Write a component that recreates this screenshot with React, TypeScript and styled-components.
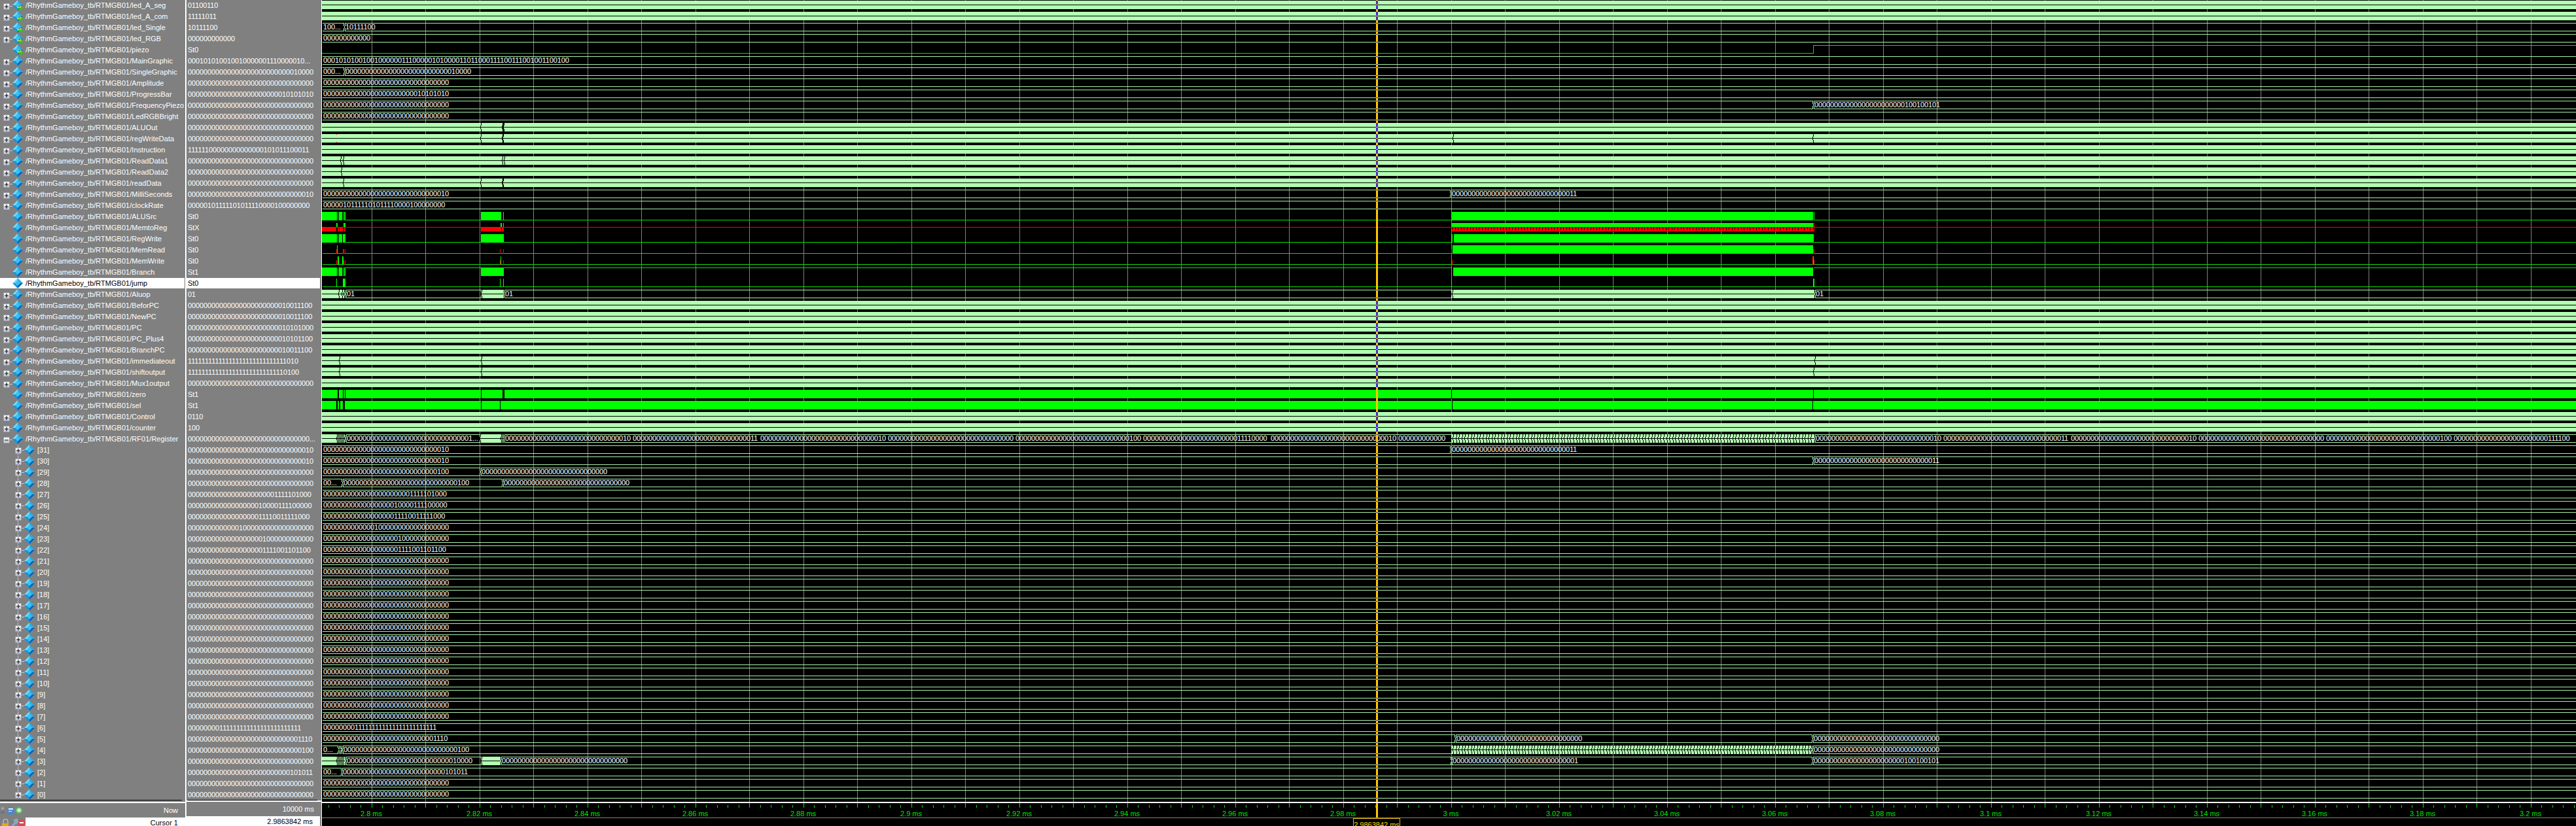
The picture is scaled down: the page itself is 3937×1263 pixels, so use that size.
import React from "react";
import styled, { createGlobalStyle } from "styled-components";

const FONT = `"Liberation Sans", Arial, sans-serif`;
const Z32 = "00000000000000000000000000000000";
const bits = (s: string) => s.padStart(32, "0");

const BAND = "#b3ffb3";
const LINE = "#a8f0a8";
const GREEN = "#00ff00";
const GLINE = "#08e008";
const RED = "#ff0000";
const END = 3937;
const CUR = 2103;

const GlobalStyle = createGlobalStyle`
  html, body { margin: 0; padding: 0; background: #808080; overflow: hidden; }
  #root { width: 3937px; height: 1263px; }
`;

const Window = styled.div`
  display: flex;
  width: 3937px;
  height: 1263px;
  overflow: hidden;
  background: #808080;
  font: 11px/16px ${FONT};
  color: #fff;
`;
const Pane = styled.div<{ $w: number }>`
  flex: 0 0 ${(p) => p.$w}px;
  display: flex;
  flex-direction: column;
  min-width: 0;
`;
const Sash = styled.div<{ $w: number }>`
  flex: 0 0 ${(p) => p.$w}px;
  background: #fff;
`;
const WavePane = styled.div`
  flex: 1 1 auto;
  display: flex;
  flex-direction: column;
  background: #000;
  min-width: 0;
`;
const List = styled.div`
  height: 1226px;
  display: flex;
  flex-direction: column;
`;
const NameRow = styled.div<{ $sel?: boolean }>`
  flex: 0 0 16px;
  margin-bottom: 1px;
  margin-right: 1px;
  display: flex;
  align-items: center;
  white-space: nowrap;
  overflow: hidden;
  background: ${(p) => (p.$sel ? "#fff" : "transparent")};
  color: ${(p) => (p.$sel ? "#000" : "#fff")};
`;
const NameText = styled.span`
  letter-spacing: 0.02px;
`;
const ValueRow = styled.div<{ $sel?: boolean }>`
  flex: 0 0 16px;
  margin-bottom: 1px;
  margin-right: 2px;
  padding-left: 2px;
  white-space: nowrap;
  overflow: hidden;
  letter-spacing: -0.12px;
  background: ${(p) => (p.$sel ? "#fff" : "transparent")};
  color: ${(p) => (p.$sel ? "#000" : "#fff")};
`;
const EndLine = styled.div<{ $l: number; $r: number }>`
  height: 1px;
  margin: -1px ${(p) => p.$r}px 0 ${(p) => p.$l}px;
  background: #000;
`;
const Divider = styled.div`
  flex: 0 0 2px;
  background: #fff;
`;
const NowRow = styled.div`
  flex: 0 0 22px;
  display: flex;
  align-items: center;
  justify-content: space-between;
  padding-right: 11px;
  line-height: 22px;
`;
const NowValue = styled(NowRow)`
  justify-content: flex-end;
`;
const CursorName = styled.div`
  flex: 0 0 13px;
  display: flex;
  align-items: flex-start;
  overflow: hidden;
`;
const CursorLabel = styled.div`
  flex: 1 1 auto;
  height: 16px;
  background: #fff;
  color: #000;
  text-align: right;
  padding-right: 11px;
  margin-right: 0;
`;
const CursorValue = styled(CursorLabel)`
  flex: 0 0 13px;
  margin-right: 2px;
`;
const CursorBar = styled.div`
  flex: 1 1 auto;
  border-top: 1px solid #808080;
  background: #000;
  overflow: hidden;
`;
const CursorTag = styled.div`
  width: 72px;
  height: 18px;
  border: 1px solid #e8b400;
  border-bottom: 0;
  box-sizing: border-box;
  color: #ffd800;
  text-align: center;
  line-height: 19px;
  white-space: nowrap;
`;
const Svg = styled.svg`
  display: block;
  flex: 0 0 auto;
`;
const WaveLabel = styled.text`
  font: 11px ${FONT};
  letter-spacing: -0.12px;
  fill: #fff;
`;
const RulerLabel = styled.text`
  font: 11px ${FONT};
  fill: #00e600;
  text-anchor: middle;
`;

/* ---------- tree / object glyphs ---------- */
const Diamond = ({ x, y = 0, out }: { x: number; y?: number; out?: boolean }) => (
  <g transform={`translate(${x} ${y})`}>
    <polygon points="8,0 0,8 8,8" fill="#78dcfb" />
    <polygon points="8,0 16,8 8,8" fill="#22aee9" />
    <polygon points="0,8 8,16 8,8" fill="#1593dd" />
    <polygon points="16,8 8,16 8,8" fill="#0a63b6" />
    <polygon points="8,3 4,8 8,12 12,8" fill="#3cc0f2" />
    {out && (
      <>
        <polygon points="7,10.5 12,10.5 12,8 16.5,12 12,16 12,13.5 7,13.5" fill="#35c81a" />
        <polygon points="7,10.5 12,10.5 12,8 14,10 12,11.8 7,11.8" fill="#d8f040" />
      </>
    )}
  </g>
);
const Expander = ({ x, y = 4, open }: { x: number; y?: number; open?: boolean }) => (
  <g transform={`translate(${x} ${y})`}>
    <rect x="0.5" y="0.5" width="9" height="9" rx="1" fill="#f2f3f8" stroke="#9a9aa6" />
    <rect x="1" y="6" width="8" height="3" fill="#c9cde0" />
    <rect x="2" y="4.5" width="6" height="1" fill="#000" />
    {!open && <rect x="4.5" y="2" width="1" height="6" fill="#000" />}
  </g>
);
const TreeIcon = ({ child, expand, open, out, last }: { child?: boolean; expand?: boolean; open?: boolean; out?: boolean; last?: boolean }) =>
  child ? (
    <Svg width={57} height={16} viewBox="0 0 57 16">
      <rect x="27" y="0" width="1" height={last ? 5 : 16} fill="#c8c8c8" />
      <rect x="32" y="8" width="5" height="1" fill="#c8c8c8" />
      <Expander x={23} />
      <Diamond x={37} />
    </Svg>
  ) : (
    <Svg width={39} height={17} viewBox="0 0 39 17">
      {expand && <rect x="14" y="9" width="5" height="1" fill="#c8c8c8" />}
      {expand && <Expander x={5} y={5} open={open} />}
      <Diamond x={19} out={out} />
    </Svg>
  );

const NowIcons = () => (
  <Svg width={36} height={16} viewBox="0 0 36 16">
    <circle cx="4" cy="5" r="2" fill="#a4a4b0" />
    <path d="M0 12 Q4 6 8 12 L8 13 L0 13 Z" fill="#6c7488" />
    <rect x="11" y="3" width="11" height="11" fill="#4d87cf" />
    <rect x="13" y="5" width="7" height="2" fill="#e8f0fa" />
    <rect x="13" y="9" width="5" height="1" fill="#e8f0fa" />
    <path d="M15 14 h4 l-2 2 z" fill="#4d87cf" />
    <circle cx="29" cy="8" r="5.5" fill="#58b458" />
    <circle cx="29" cy="8" r="3.6" fill="#9fe09f" />
    <rect x="26.5" y="7.5" width="5" height="1" fill="#fff" />
    <rect x="28.5" y="5.5" width="1" height="5" fill="#fff" />
  </Svg>
);
const CursorIcons = () => (
  <Svg width={39} height={16} viewBox="0 0 39 16" style={{ flex: "0 0 39px" }}>
    <path d="M5 9 V6 a3.5 3.5 0 0 1 7 0 V9" fill="none" stroke="#c8c8c8" strokeWidth="1.2" />
    <rect x="3" y="9" width="10" height="7" fill="#e0aa20" />
    <path d="M16 15 L23 7 L21.5 4 Q24 1.5 27 3 L25 5.5 L26 6.5 L28 5 Q28.5 8 25.5 9 L24 8.5 L18 16 Z" fill="#6f9fd8" stroke="#d8e4f4" strokeWidth="0.5" />
    <circle cx="33" cy="8" r="5.5" fill="#e04848" />
    <rect x="30" y="7" width="6" height="2" fill="#fff" />
  </Svg>
);

/* ---------- signal data ---------- */
type Seg = { a: number; b: number; text?: string | string[]; band?: boolean; marks?: number[]; dots?: number[] };
type Sig = {
  base: "low" | "high" | "mid-red" | "fullfill";
  fills?: number[][];
  gaps?: number[][];
  ticks?: number[];
  halfRed?: number[][];
  tallRed?: number[][];
  half?: number[][];
  lows?: number[][];
  stripes?: number[];
};
type RowDef = {
  name: string;
  value: string;
  child?: boolean;
  out?: boolean;
  open?: boolean;
  sel?: boolean;
  segs?: Seg[];
  sig?: Sig;
};
const P = "/RhythmGameboy_tb/RTMGB01/";
const band = (...marks: number[]): Seg[] => [{ a: 492, b: END, band: true, marks }];
const txt = (s: string): Seg[] => [{ a: 492, b: END, text: s }];

const hash = (a: number, b: number) => {
  const out: number[] = [];
  for (let x = a; x < b; x += 4.6) out.push(Math.round(x));
  return out;
};

const regWords = [
  "00000000000000000000000000000010",
  "00000000000000000000000000000011",
  "00000000000000000000000000000010",
  "00000000000000000000000000000000",
  "00000000000000000000000000000100",
  "00000000000000000000000011110000",
  "00000000000000000000000000000010",
  "00000000000000000000000001111000",
];

const rowDefs: RowDef[] = [
  { name: P + "led_A_seg", value: "01100110", out: true, segs: band() },
  { name: P + "led_A_com", value: "11111011", out: true, segs: band() },
  { name: P + "led_Single", value: "10111100", out: true, segs: [{ a: 492, b: 526, text: "100..." }, { a: 526, b: END, text: "10111100" }] },
  { name: P + "led_RGB", value: "000000000000", out: true, segs: txt("000000000000") },
  { name: P + "piezo", value: "St0", out: true, sig: { base: "low", lows: [[492, 2771]], ticks: [] } },
  { name: P + "MainGraphic", value: "000101010010010000001110000010...", segs: txt("0001010100100100000011100000101000011011000111100111001001100100") },
  { name: P + "SingleGraphic", value: bits("10000"), segs: [{ a: 492, b: 526, text: "000..." }, { a: 526, b: END, text: bits("10000") }] },
  { name: P + "Amplitude", value: Z32, segs: txt(Z32) },
  { name: P + "ProgressBar", value: bits("10101010"), segs: txt(bits("10101010")) },
  { name: P + "FrequencyPiezo", value: Z32, segs: [{ a: 492, b: 2771, text: Z32 }, { a: 2771, b: END, text: bits("100100101") }] },
  { name: P + "LedRGBBright", value: Z32, segs: txt(Z32) },
  { name: P + "ALUOut", value: Z32, segs: band(734, 767, 768, 769) },
  { name: P + "regWriteData", value: Z32, segs: [{ a: 492, b: END, band: true, marks: [734, 767, 768, 2220, 2770], dots: [514] }] },
  { name: P + "Instruction", value: "11111100000000000000101011100011", segs: band() },
  { name: P + "ReadData1", value: Z32, segs: band(520, 524, 767, 770) },
  { name: P + "ReadData2", value: Z32, segs: band(521) },
  { name: P + "readData", value: Z32, segs: band(524, 734, 767, 768) },
  { name: P + "MilliSeconds", value: bits("10"), segs: [{ a: 492, b: 2217, text: bits("10") }, { a: 2217, b: END, text: bits("11") }] },
  { name: P + "clockRate", value: "00000101111101011110000100000000", segs: txt("00000101111101011110000100000000") },
  {
    name: P + "ALUSrc", value: "St0",
    sig: { base: "low", lows: [[528, 2218], [2772, END]], fills: [[492, 515], [519, 523], [526, 528], [735, 766], [769, 770], [2218, 2771]], ticks: [516, 518, 524, 2772] },
  },
  {
    name: P + "MemtoReg", value: "StX",
    sig: {
      base: "mid-red", lows: [[528, 735], [770, 2218], [2772, END]],
      halfRed: [[492, 514], [516, 518], [519, 524], [526, 528], [735, 766], [767, 770]],
      half: [[514, 516], [525, 528], [765, 767], [769, 770], [2218, 2771]],
      stripes: [2219, 2771],
      tallRed: [[2771, 2773]],
    },
  },
  {
    name: P + "RegWrite", value: "St0",
    sig: { base: "low", lows: [[528, 735], [770, 2218], [2772, END]], fills: [[492, 515], [516, 517], [518, 523], [524, 528], [735, 770], [2218, 2220], [2222, 2772]] },
  },
  {
    name: P + "MemRead", value: "St0",
    sig: {
      base: "low", lows: [[493, END]], ticks: [515], fills: [[2220, 2771]],
      halfRed: [[514, 515], [524, 526], [527, 528], [764, 765], [769, 770], [2218, 2219], [2771, 2773]],
    },
  },
  {
    name: P + "MemWrite", value: "St0",
    sig: {
      base: "low", lows: [[493, END]], ticks: [516, 517, 523, 524, 765, 2771],
      halfRed: [[514, 515], [525, 526], [527, 528], [764, 765], [769, 770], [2219, 2220], [2772, 2773]],
      tallRed: [[2770, 2771]],
    },
  },
  {
    name: P + "Branch", value: "St1",
    sig: { base: "high", lows: [[528, 735], [770, 2218], [2772, END]], fills: [[492, 515], [519, 523], [526, 528], [735, 770], [2218, 2219], [2221, 2771]], ticks: [516, 518, 524] },
  },
  {
    name: P + "jump", value: "St0", sel: true,
    sig: { base: "low", lows: [[493, END]], ticks: [514, 764, 769, 2218], fills: [[524, 528], [2771, 2773]] },
  },
  {
    name: P + "Aluop", value: "01",
    segs: [
      { a: 492, b: 528, band: true, marks: [517, 522, 525] }, { a: 528, b: 735, text: "01" },
      { a: 735, b: 770, band: true, marks: [735] }, { a: 770, b: 2218, text: "01" },
      { a: 2218, b: 2773, band: true, marks: [2219] }, { a: 2773, b: END, text: "01" },
    ],
  },
  { name: P + "BeforPC", value: bits("10011100"), segs: band() },
  { name: P + "NewPC", value: bits("10011100"), segs: band() },
  { name: P + "PC", value: bits("10101000"), segs: band() },
  { name: P + "PC_Plus4", value: bits("10101100"), segs: band() },
  { name: P + "BranchPC", value: bits("10011100"), segs: band() },
  { name: P + "immediateout", value: "11111111111111111111111111111010", segs: band(518, 735, 2773) },
  { name: P + "shiftoutput", value: "11111111111111111111111111110100", segs: band(518, 735, 2771) },
  { name: P + "Mux1output", value: Z32, segs: band() },
  {
    name: P + "zero", value: "St1",
    sig: { base: "fullfill", gaps: [[516, 518], [524, 525], [527, 528], [735, 736], [768, 771], [2218, 2219], [2771, 2772]] },
  },
  {
    name: P + "sel", value: "St1",
    sig: { base: "fullfill", gaps: [[514, 516], [518, 520], [524, 527], [735, 736], [764, 765], [2219, 2220], [2770, 2771]] },
  },
  { name: P + "Control", value: "0110", segs: band() },
  { name: P + "counter", value: "100", segs: band() },
  {
    name: "/RhythmGameboy_tb/RTMGB01/RF01/Register", value: "0000000000000000000000000000000...", open: true,
    segs: [
      { a: 492, b: 528, band: true, marks: [514, 516, 518, 520, 522, 524, 526] },
      { a: 528, b: 733, text: "00000000000000000000000000000001..." },
      { a: 733, b: 770, band: true, marks: [733, 765, 767, 769] },
      { a: 770, b: 2218, text: regWords },
      { a: 2218, b: 2773, band: true, marks: hash(2220, 2770) },
      { a: 2773, b: END, text: regWords },
    ],
  },
];

const regVals: Record<number, string> = {
  31: bits("10"), 30: bits("10"), 27: bits("1111101000"), 26: bits("10000111100000"), 25: bits("11110011111000"),
  24: bits("1000000000000000000"), 23: bits("1000000000000"), 22: bits("1111001101100"),
  6: "00000000111111111111111111111111", 5: bits("1110"), 4: bits("100"), 2: bits("101011"),
};
const regSegs: Record<number, Seg[]> = {
  31: [{ a: 492, b: 2217, text: bits("10") }, { a: 2217, b: END, text: bits("11") }],
  30: [{ a: 492, b: 2771, text: bits("10") }, { a: 2771, b: END, text: bits("11") }],
  29: [{ a: 492, b: 734, text: bits("100") }, { a: 734, b: END, text: Z32 }],
  28: [{ a: 492, b: 523, text: "00..." }, { a: 523, b: 768, text: bits("100") }, { a: 768, b: END, text: Z32 }],
  5: [{ a: 492, b: 2224, text: bits("1110") }, { a: 2224, b: 2770, text: Z32 }, { a: 2770, b: END, text: Z32 }],
  4: [
    { a: 492, b: 516, text: "0..." }, { a: 516, b: 523, band: true, marks: [516, 518, 520] }, { a: 523, b: 2218, text: bits("100") },
    { a: 2218, b: 2770, band: true, marks: hash(2220, 2768) }, { a: 2770, b: END, text: Z32 },
  ],
  3: [
    { a: 492, b: 528, band: true, marks: [514, 516, 518, 520, 522, 524] }, { a: 528, b: 735, text: bits("10000") },
    { a: 735, b: 765, band: true, marks: [735] }, { a: 765, b: 2218, text: Z32 },
    { a: 2218, b: 2770, text: bits("1") }, { a: 2770, b: END, text: bits("100100101") },
  ],
  2: [{ a: 492, b: 522, text: "00..." }, { a: 522, b: END, text: bits("101011") }],
};
for (let n = 31; n >= 0; n--) {
  const value = regVals[n] ?? Z32;
  rowDefs.push({ name: `[${n}]`, value, child: true, segs: regSegs[n] ?? [{ a: 492, b: END, text: value }] });
}

/* ---------- waveform drawing ---------- */
const R = ({ x, y, w, h, c }: { x: number; y: number; w: number; h: number; c: string }) => (
  <rect x={x} y={y} width={w} height={h} fill={c} />
);

const SegText = ({ seg, low }: { seg: Seg; low: number }) => {
  const t = seg.text!;
  if (typeof t === "string") {
    return <WaveLabel x={seg.a + 2} y={low - 2}>{t}</WaveLabel>;
  }
  const out: React.ReactNode[] = [];
  let i = 0;
  for (let x = seg.a + 2; x + 28 < seg.b; x += 195, i++) {
    const word = t[i % t.length];
    const room = Math.floor((seg.b - x - 4) / 6);
    out.push(<WaveLabel key={x} x={x} y={low - 2}>{word.slice(0, room)}</WaveLabel>);
  }
  return <>{out}</>;
};

const BusRow = ({ r, segs }: { r: number; segs: Seg[] }) => {
  const low = 17 * r + 13;
  const high = low - 12;
  return (
    <g>
      {segs.map((s, i) =>
        s.band ? (
          <g key={i}>
            <R x={s.a} y={high} w={s.b - s.a} h={13} c={BAND} />
            <R x={s.a} y={low - 6} w={s.b - s.a} h={1} c="#000" />
            {(s.marks ?? []).map((m, j) => (
              <g key={j}>
                <R x={m + 1} y={high} w={1} h={4} c="#000" />
                <R x={m} y={low - 8} w={1} h={5} c="#000" />
                <R x={m + 1} y={low - 3} w={1} h={4} c="#000" />
              </g>
            ))}
            {(s.dots ?? []).map((m, j) => (
              <g key={j}>
                <R x={m} y={high} w={1} h={1} c={RED} />
                <R x={m} y={low} w={1} h={1} c={RED} />
              </g>
            ))}
          </g>
        ) : (
          <g key={i}>
            <R x={s.a + 1} y={high} w={s.b - s.a - 1} h={1} c={LINE} />
            <R x={s.a + 1} y={low} w={s.b - s.a - 1} h={1} c={LINE} />
            {s.a > 492 && (
              <>
                <R x={s.a - 1} y={high + 1} w={1} h={4} c={LINE} />
                <R x={s.a + 1} y={high + 1} w={1} h={4} c={LINE} />
                <R x={s.a} y={low - 7} w={1} h={3} c={LINE} />
                <R x={s.a - 1} y={low - 4} w={1} h={4} c={LINE} />
                <R x={s.a + 1} y={low - 4} w={1} h={4} c={LINE} />
              </>
            )}
            <SegText seg={s} low={low} />
          </g>
        )
      )}
    </g>
  );
};

const SigRow = ({ r, sig }: { r: number; sig: Sig }) => {
  const low = 17 * r + 13;
  const high = low - 12;
  const mid = low - 6;
  const stripes: number[] = [];
  if (sig.stripes) for (let x = sig.stripes[0]; x < sig.stripes[1]; x += 4.6) stripes.push(Math.round(x));
  const inPiezo = r === 4;
  return (
    <g>
      {sig.base === "high" && (sig.lows ?? []).map(([a, b], i) => <R key={i} x={a} y={high} w={b - a} h={1} c={GLINE} />)}
      {sig.base === "low" && (sig.lows ?? []).map(([a, b], i) => <R key={i} x={a} y={low} w={b - a} h={1} c={GLINE} />)}
      {inPiezo && (
        <>
          <R x={2771} y={high} w={1} h={13} c={GLINE} />
          <R x={2771} y={high} w={END - 2771} h={1} c={GLINE} />
        </>
      )}
      {sig.base === "mid-red" && <R x={492} y={mid} w={END - 492} h={1} c={RED} />}
      {sig.base === "fullfill" && <R x={492} y={high} w={END - 492} h={13} c={GREEN} />}
      {(sig.gaps ?? []).map(([a, b], i) => <R key={i} x={a} y={high} w={b - a} h={13} c="#000" />)}
      {(sig.fills ?? []).map(([a, b], i) => <R key={i} x={a} y={high} w={b - a} h={13} c={GREEN} />)}
      {(sig.ticks ?? []).map((x, i) => <R key={i} x={x} y={high} w={1} h={13} c={GREEN} />)}
      {(sig.half ?? []).map(([a, b], i) => <R key={i} x={a} y={high} w={b - a} h={6} c={GREEN} />)}
      {(sig.halfRed ?? []).map(([a, b], i) => <R key={i} x={a} y={mid} w={b - a} h={7} c={RED} />)}
      {(sig.tallRed ?? []).map(([a, b], i) => <R key={i} x={a} y={high} w={b - a} h={13} c={RED} />)}
      {sig.stripes && <R x={sig.stripes[0]} y={mid + 1} w={sig.stripes[1] - sig.stripes[0]} h={6} c={RED} />}
      {stripes.map((x, i) => <R key={i} x={x} y={mid + 1} w={1} h={3 + (i % 2)} c="#000" />)}
    </g>
  );
};

const GRID: number[] = [];
for (let x = 567.5; x < END; x += 82.5) GRID.push(Math.round(x));
const TICKS: { x: number; big: boolean }[] = [];
for (let i = -4; 567.5 + i * 16.5 < END; i++) {
  TICKS.push({ x: Math.round(567.5 + i * 16.5), big: ((i % 5) + 5) % 5 === 0 });
}
const LABELS: { x: number; t: string }[] = [];
for (let i = 0; i <= 20; i++) {
  const v = (280 + i * 2) / 100;
  LABELS.push({ x: 567.5 + i * 165, t: `${v} ms` });
}

const cursorMarks = () => {
  const out: React.ReactNode[] = [];
  rowDefs.forEach((d, r) => {
    if (!d.segs) return;
    const low = 17 * r + 13;
    const seg = d.segs.find((s) => s.a <= CUR && CUR < s.b);
    if (!seg) return;
    if (seg.band) {
      out.push(<R key={`a${r}`} x={CUR} y={low - 12} w={3} h={6} c="#4a2cc4" />);
      out.push(<R key={`b${r}`} x={CUR} y={low - 5} w={3} h={6} c="#4a2cc4" />);
    } else {
      out.push(<R key={`a${r}`} x={CUR} y={low - 12} w={3} h={1} c="#4a2cc4" />);
      out.push(<R key={`b${r}`} x={CUR} y={low} w={3} h={1} c="#4a2cc4" />);
    }
  });
  return out;
};

const Canvas = () => (
  <Svg width={END - 492} height={1226} viewBox={`492 0 ${END - 492} 1226`} shapeRendering="crispEdges">
    {GRID.map((x) => <R key={x} x={x} y={0} w={1} h={1226} c="#808080" />)}
    {rowDefs.map((d, r) =>
      d.sig ? <SigRow key={r} r={r} sig={d.sig} /> : <BusRow key={r} r={r} segs={d.segs!} />
    )}
    <R x={CUR} y={0} w={3} h={1226} c="#ffc800" />
    {cursorMarks()}
  </Svg>
);

const Ruler = () => (
  <Svg width={END - 492} height={22} viewBox={`492 0 ${END - 492} 22`} shapeRendering="crispEdges">
    {TICKS.map((t) => <R key={t.x} x={t.x} y={t.big ? 0 : 3} w={1} h={t.big ? 7 : 4} c="#00e600" />)}
    {LABELS.map((l) => <RulerLabel key={l.t} x={l.x} y={20}>{l.t}</RulerLabel>)}
    <R x={CUR} y={0} w={3} h={22} c="#ffc800" />
  </Svg>
);

export default function App() {
  return (
    <Window>
      <GlobalStyle />
      <Pane $w={283}>
        <List>
          {rowDefs.map((d) => (
            <NameRow key={d.name} $sel={d.sel}>
              <TreeIcon child={d.child} expand={d.segs !== undefined && !d.child} open={d.open} out={d.out} last={d.name === "[0]"} />
              <NameText>{d.name}</NameText>
            </NameRow>
          ))}
          <EndLine $l={0} $r={5} />
        </List>
        <Divider />
        <NowRow>
          <NowIcons />
          <span>Now</span>
        </NowRow>
        <CursorName>
          <CursorIcons />
          <CursorLabel>Cursor 1</CursorLabel>
        </CursorName>
      </Pane>
      <Sash $w={2} />
      <Pane $w={206}>
        <List>
          {rowDefs.map((d) => (
            <ValueRow key={d.name} $sel={d.sel}>{d.value}</ValueRow>
          ))}
          <EndLine $l={2} $r={6} />
        </List>
        <Divider />
        <NowValue>10000 ms</NowValue>
        <CursorValue>2.9863842 ms</CursorValue>
      </Pane>
      <Sash $w={1} />
      <WavePane>
        <Canvas />
        <Divider />
        <Ruler />
        <CursorBar>
          <CursorTag style={{ marginLeft: 2068 - 492 }}>2.9863842 ms</CursorTag>
        </CursorBar>
      </WavePane>
    </Window>
  );
}
